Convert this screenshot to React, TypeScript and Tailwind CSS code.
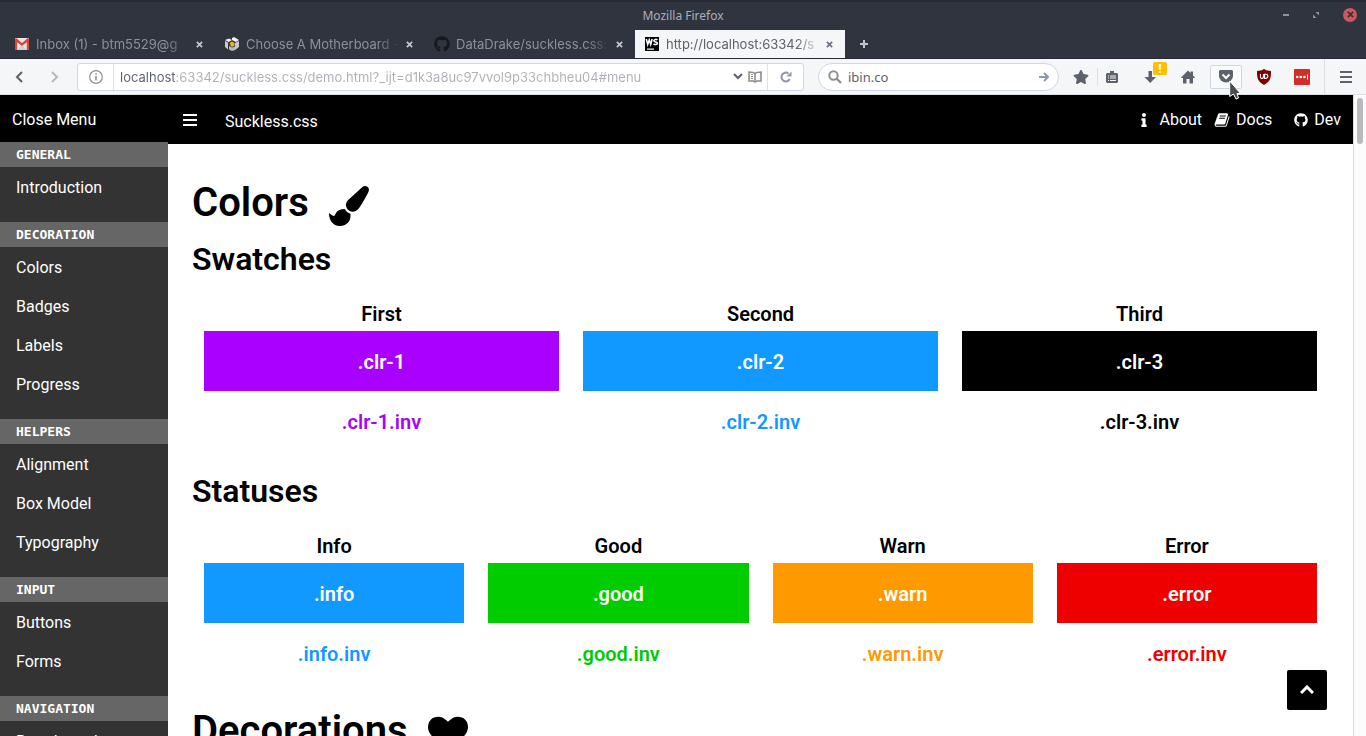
import type { ReactNode } from 'react';
import { FaGithub, FaStar, FaInfo } from 'react-icons/fa';

const menu = [
  { title: 'General', items: ['Introduction'] },
  { title: 'Decoration', items: ['Colors', 'Badges', 'Labels', 'Progress'] },
  { title: 'Helpers', items: ['Alignment', 'Box Model', 'Typography'] },
  { title: 'Input', items: ['Buttons', 'Forms'] },
  { title: 'Navigation', items: ['Breadcrumbs'] },
];

const swatches = [
  { label: 'First', name: '.clr-1', fill: 'bg-[#aa00ff]', inv: 'text-[#aa00ff]' },
  { label: 'Second', name: '.clr-2', fill: 'bg-[#1199ff]', inv: 'text-[#1199ff]' },
  { label: 'Third', name: '.clr-3', fill: 'bg-black', inv: 'text-black' },
];

const statuses = [
  { label: 'Info', name: '.info', fill: 'bg-[#1199ff]', inv: 'text-[#1199ff]' },
  { label: 'Good', name: '.good', fill: 'bg-[#00cc00]', inv: 'text-[#00cc00]' },
  { label: 'Warn', name: '.warn', fill: 'bg-[#ff9900]', inv: 'text-[#ff9900]' },
  { label: 'Error', name: '.error', fill: 'bg-[#ee0000]', inv: 'text-[#ee0000]' },
];

function BrushIcon() {
  return (
    <svg viewBox="0 0 1792 1792" className="size-10" fill="currentColor">
      <path d="M1615 0q70 0 122.5 46.5t52.5 116.5q0 63-45 151-332 629-465 752-97 91-218 91-126 0-216.5-92.5t-90.5-219.5q0-128 92-212l638-579q59-54 130-54zm-909 1034q39 76 106.5 130t150.5 76l1 71q4 213-129.5 347t-348.5 134q-123 0-218-46.5t-152.5-127.5-86.5-183-29-220q7 5 41 30t62 44.5 59 36.5 46 17q41 0 55-37 25-66 57.5-112.5t69.5-76 88-47.5 103-25.5 125-10.5z" />
    </svg>
  );
}

function HeartIcon() {
  return (
    <svg viewBox="0 0 1792 1792" className="size-10" fill="currentColor">
      <path d="M896 1664q-26 0-44-18l-624-602q-10-8-27.5-26t-55.5-65.5-68-97.5-53.5-121-23.5-138q0-220 127-344t351-124q62 0 126.5 21.5t120 58 95.5 68.5 76 68q36-36 76-68t95.5-68.5 120-58 126.5-21.5q224 0 351 124t127 344q0 221-229 450l-623 600q-18 18-44 18z" />
    </svg>
  );
}

function BookIcon() {
  return (
    <svg viewBox="0 0 1792 1792" className="size-4" fill="currentColor">
      <path d="M1703 478q40 57 18 129l-275 906q-19 64-76.5 107.5t-122.5 43.5h-923q-77 0-148.5-53.5t-99.5-131.5q-24-67-2-127 0-4 3-27t4-37q1-8-3-21.5t-3-19.5q2-11 8-21t16.5-23.5 16.5-23.5q23-38 45-91.5t30-91.5q3-10 .5-30t-.5-28q3-11 17-28t17-23q21-36 42-92t25-90q1-9-2.5-32t.5-28q4-13 22-30.5t22-22.5q19-26 42.5-84.5t27.5-96.5q1-8-3-25.5t-2-26.5q2-8 9-18t18-23 17-21q8-12 16.5-30.5t15-35 16-36 19.5-32 26.5-23.5 36-11.5 47.5 5.5l-1 3q38-9 51-9h761q74 0 114 56t18 130l-274 906q-36 119-71.5 153.5t-128.5 34.5h-869q-27 0-38 15-11 16-1 43 24 70 144 70h923q29 0 56-15.5t35-41.5l300-987q7-22 5-57 38 15 59 43zm-1064 2q-4 13 2 22.5t20 9.5h608q13 0 25.5-9.5t16.5-22.5l21-64q4-13-2-22.5t-20-9.5h-608q-13 0-25.5 9.5t-16.5 22.5zm-83 256q-4 13 2 22.5t20 9.5h608q13 0 25.5-9.5t16.5-22.5l21-64q4-13-2-22.5t-20-9.5h-608q-13 0-25.5 9.5t-16.5 22.5z" />
    </svg>
  );
}

function GmailIcon() {
  return (
    <svg viewBox="0 0 14 12" className="h-3 w-[14px]">
      <rect width="14" height="12" rx="1" fill="#e8e8e8" />
      <path d="M2 12l5-5 5 5z" fill="#d2d2d2" />
      <path d="M0 1.2L1.2 0 7 5 12.8 0 14 1.2V12h-2.2V4.2L7 8 2.2 4.2V12H0z" fill="#d8483b" />
    </svg>
  );
}

function CubeIcon() {
  return (
    <svg viewBox="0 0 14 14" className="size-[14px]">
      <path d="M0 3l4-1.5L7 3 3.5 5zM7 1l2-1 5 3-3 2-4-2z" fill="#f3f3f3" />
      <path d="M0 4l3 1.5v7L0 10zM14 4l-4 2v7l4-3z" fill="#c9c9c9" />
      <path d="M4 9l3 1.5 3-1V13l-3 1-3-1.5z" fill="#b9b9b9" />
      <path d="M5 5.5L7 4.500l2.500 1.500v2.500L7 10 5 8.5z" fill="#f0b323" />
      <path d="M3.500 6l2 1v2l-2-1z" fill="#5c4a1c" />
    </svg>
  );
}

function WebStormIcon() {
  return (
    <svg viewBox="0 0 14 14" className="size-[14px]">
      <rect width="14" height="14" fill="#000" />
      <path d="M1.300 2l1.400 5.500L4.200 3l1.500 4.500L7.100 2M12.500 3c-1-.9-3.600-.8-3.600.7 0 1.600 3.500.9 3.500 2.600 0 1.500-2.600 1.600-3.800.5" fill="none" stroke="#fff" strokeWidth="1.600" />
      <path d="M2 11.500h7v1.200H2z" fill="#fff" />
    </svg>
  );
}

function CloseIcon() {
  return (
    <svg viewBox="0 0 8 8" className="size-[7px]" stroke="currentColor" strokeWidth="2">
      <path d="M1 1l6 6M7 1L1 7" />
    </svg>
  );
}

type TabProps = { icon: ReactNode; title: string; active?: boolean };

function Tab({ icon, title, active }: TabProps) {
  return (
    <div className={`flex w-[210px] items-center pr-3 pl-[9px] ${active ? 'bg-[#f5f6f7] text-[#5c616c]' : 'text-[#8b919b]'}`}>
      <button className="flex min-w-0 flex-1 items-center gap-[6px] text-[13px]">
        <span className="flex size-4 shrink-0 items-center justify-center">{icon}</span>
        <span className="min-w-0 flex-1 overflow-hidden pt-[2px] text-left whitespace-nowrap mask-r-from-85%">{title}</span>
      </button>
      <button aria-label="Close tab" className={`ml-[6px] ${active ? 'text-[#6b7180]' : 'text-[#c3c7cf]'}`}>
        <CloseIcon />
      </button>
    </div>
  );
}

function Browser() {
  return (
    <div className="shrink-0 font-['Noto_Sans',sans-serif]">
      <div className="border-b border-[#262932] bg-[#2f343f]">
        <div className="grid h-[30px] grid-cols-3 items-center border-t-2 border-[#272a34] text-[#a9b0bd]">
          <span className="col-start-2 text-center text-xs">Mozilla Firefox</span>
          <div className="flex h-full items-center justify-end gap-6 pr-[9px] pb-[3px]">
            <button aria-label="Minimize" className="h-[2px] w-[6px] bg-[#8e949f]" />
            <button aria-label="Restore" className="text-[#8e949f]">
              <svg viewBox="0 0 6 6" className="size-[6px]" fill="currentColor">
                <path d="M2.500 0H6v3.500zM0 2.500L3.500 6H0z" />
              </svg>
            </button>
            <button aria-label="Close window" className="flex size-[14px] items-center justify-center rounded-full bg-[#cc575d] text-[#2f343f]">
              <CloseIcon />
            </button>
          </div>
        </div>
        <div className="flex h-[28px] pl-[5px] font-['Inter','Noto_Sans',sans-serif]">
          <Tab icon={<GmailIcon />} title="Inbox (1) - btm5529@g" />
          <Tab icon={<CubeIcon />} title="Choose A Motherboard -" />
          <Tab icon={<FaGithub className="size-4 text-[#16181c]" />} title="DataDrake/suckless.css:" />
          <Tab icon={<WebStormIcon />} title="http://localhost:63342/s" active />
          <button aria-label="New tab" className="ml-[15px] text-[#c3c7cf]">
            <svg viewBox="0 0 8 8" className="size-2" fill="none" stroke="currentColor" strokeWidth="2">
              <path d="M4 0v8M0 4h8" />
            </svg>
          </button>
        </div>
      </div>

      <div className="flex h-9 items-center border-b border-[#dcdfe3] bg-[#f5f6f7] text-[#5c616c]">
        <button aria-label="Back" className="ml-[15px]">
          <svg viewBox="0 0 8 12" className="h-3 w-2" fill="none" stroke="currentColor" strokeWidth="2">
            <path d="M7 1L2 6l5 5" />
          </svg>
        </button>
        <button aria-label="Forward" className="ml-7 text-[#b5b8be]">
          <svg viewBox="0 0 8 12" className="h-3 w-2" fill="none" stroke="currentColor" strokeWidth="2">
            <path d="M1 1l5 5-5 5" />
          </svg>
        </button>

        <div className="ml-[18px] flex h-7 min-w-0 flex-1 items-center rounded-[3px] border border-[#cfd6e6] bg-white">
          <button aria-label="Site information" className="flex h-full w-9 shrink-0 items-center justify-center border-r border-[#dfe3ec] text-[#8a8e97]">
            <svg viewBox="0 0 14 14" className="size-[14px]" fill="none" stroke="currentColor">
              <circle cx="7" cy="7" r="6.300" strokeWidth="1.200" />
              <path d="M7 6v4.500M7 3.300v1.500" strokeWidth="1.600" />
            </svg>
          </button>
          <input
            aria-label="Address"
            defaultValue="localhost:63342/suckless.css/demo.html?_ijt=d1k3a8uc97vvol9p33chbheu04#menu"
            className="ml-[6px] min-w-0 flex-1 bg-linear-to-r from-[#5c616c] from-[55px] to-[#adb0b6] to-[55px] bg-clip-text pt-[2px] font-['Inter','Noto_Sans',sans-serif] text-[13px] text-transparent outline-none"
          />
          <button aria-label="Show history">
            <svg viewBox="0 0 10 7" className="h-[7px] w-[10px]" fill="none" stroke="currentColor" strokeWidth="2">
              <path d="M1 1l4 4 4-4" />
            </svg>
          </button>
          <button aria-label="Reader view" className="mx-[5px] text-[#8c8f8c]">
            <svg viewBox="0 0 14 12" className="h-3 w-[14px]" fill="none" stroke="currentColor" strokeWidth="1.600">
              <path d="M7 2.500C5.500 1 3.500 1 1 1v9h4.500L7 11l1.500-1H13V1C10.500 1 8.500 1 7 2.500v7" />
              <path d="M3 3.500h2M3 5.500h2M3 7.500h2" strokeWidth="1" />
            </svg>
          </button>
          <button aria-label="Reload" className="flex h-full w-[36px] items-center justify-center border-l border-[#dfe3ec] text-[#8f98a8]">
            <svg viewBox="0 0 12 12" className="size-3" fill="none" stroke="currentColor" strokeWidth="2">
              <path d="M9.800 8A4.400 4.400 0 1 1 8.500 2.500" />
              <path d="M6.500 5.500h5v-5z" fill="currentColor" stroke="none" />
            </svg>
          </button>
        </div>

        <div className="ml-[14px] flex h-7 w-[241px] items-center rounded-full border border-[#cfd6e6] bg-white px-[9px]">
          <svg viewBox="0 0 14 14" className="size-[14px] shrink-0 text-[#8f9090]" fill="none" stroke="currentColor" strokeWidth="2">
            <circle cx="5.500" cy="5.500" r="4.200" />
            <path d="M8.500 8.500L13 13" strokeWidth="2.400" />
          </svg>
          <input aria-label="Search" defaultValue="ibin.co" className="ml-[6px] min-w-0 flex-1 pt-[2px] text-[13px] outline-none" />
          <button aria-label="Go" className="text-[#8f98a8]">
            <svg viewBox="0 0 10 10" className="size-[10px]" fill="none" stroke="currentColor" strokeWidth="2">
              <path d="M0 5h8M5 1l4 4-4 4" />
            </svg>
          </button>
        </div>

        <div className="ml-[14px] flex items-center">
          <button aria-label="Bookmark" className="pr-2">
            <FaStar className="size-4" />
          </button>
          <span className="h-[18px] w-px bg-[#dcdfe3]" />
          <button aria-label="Bookmarks list" className="w-[33px] pl-2">
            <svg viewBox="0 0 12 12" className="size-3" fill="currentColor">
              <path d="M4 2V0h4v2h3l1 1v8l-1 1H1l-1-1V3l1-1z" />
              <path d="M2 5h1M4 5h6M2 7h1M4 7h6M2 9.500h1M4 9.500h6" stroke="#f5f6f7" />
            </svg>
          </button>
          <button aria-label="Downloads" className="relative flex w-[38px] justify-center">
            <svg viewBox="0 0 12 12" className="size-3" fill="currentColor">
              <path d="M4.500 0h3.500v6H12l-5.800 6L.5 6h4z" />
            </svg>
            <span className="absolute -top-[9px] left-[22px] flex h-[13px] w-[14px] items-center justify-center rounded-[2px] bg-[#ffbf00] text-xs leading-[13px] font-bold text-white">!</span>
          </button>
          <button aria-label="Home" className="flex w-[38px] justify-center">
            <svg viewBox="0 0 14 14" className="size-[14px]" fill="currentColor">
              <path d="M7 .5l2.500 2.500V1.500h2.500v4L14 7.500 13.500 8H12v5.500H8.500V9h-3v4.500H2V8H.5L0 7.500z" />
            </svg>
          </button>
          <button aria-label="Save to Pocket" className="relative mx-[3px] flex h-6 w-8 items-center justify-center rounded-[2px] border border-[#cfd6e6] bg-[#fafbfd]">
            <svg viewBox="0 0 14 13" className="h-[13px] w-[14px]">
              <path d="M1 0h12l1 1v5a7 6.500 0 0 1-14 0V1z" fill="currentColor" />
              <path d="M3.500 4.500L7 8l3.500-3.500" fill="none" stroke="#fff" strokeWidth="2" />
            </svg>
            <svg viewBox="0 0 12 20" className="absolute top-[14px] left-[18px] z-10 h-5 w-3">
              <path d="M.7 1v15.500l3.800-2.500 2.500 5 2.500-1-1.500-4.500h3.500z" fill="#4b4b4b" stroke="#fff" />
            </svg>
          </button>
          <button aria-label="uBlock Origin" className="flex w-[38px] justify-center">
            <svg viewBox="0 0 14 16" className="h-4 w-[14px]">
              <path d="M7 0c2.500 1.500 4.500 1.800 7 2 0 6 0 10-7 14C0 12 0 8 0 2c2.500-.2 4.500-.5 7-2z" fill="#800000" />
              <path d="M3.500 5v3q0 1.500 1.300 1.500T6.500 8V5M7 5.200h2q2 .2 2 2.100T9 9.400H7.600V5" fill="none" stroke="#fff" strokeWidth="1.100" />
            </svg>
          </button>
          <button aria-label="LastPass" className="flex w-[38px] justify-center">
            <svg viewBox="0 0 16 16" className="size-4">
              <rect width="16" height="16" rx="1" fill="#d32d27" />
              <circle cx="3.200" cy="8" r="1.300" fill="#fff" />
              <circle cx="6.800" cy="8" r="1.300" fill="#fff" />
              <circle cx="10.400" cy="8" r="1.300" fill="#fff" />
              <path d="M13.500 5.500v5" stroke="#fff" />
            </svg>
          </button>
        </div>
        <button aria-label="Open menu" className="ml-[3px] flex h-9 w-[42px] items-center justify-center border-l border-[#dcdfe3]">
          <svg viewBox="0 0 12 12" className="size-3" stroke="currentColor" strokeWidth="2">
            <path d="M0 1h12M0 6h12M0 11h12" />
          </svg>
        </button>
      </div>
    </div>
  );
}

function Sidebar() {
  return (
    <aside className="w-[168px] shrink-0 overflow-hidden bg-[#333333] text-white">
      <a href="#content" className="block h-[47px] bg-black px-3 leading-[49px]">
        Close Menu
      </a>
      {menu.map((group) => (
        <nav key={group.title} className="mb-4">
          <h6 className="bg-[#666666] px-4 font-['DejaVu_Sans_Mono',monospace] text-[13px] leading-[25px] font-bold uppercase">
            {group.title}
          </h6>
          {group.items.map((item) => (
            <a key={item} href="#menu" className="block h-[39px] px-4 leading-[41px]">
              {item}
            </a>
          ))}
        </nav>
      ))}
    </aside>
  );
}

function NavBar() {
  return (
    <header className="flex h-[49px] items-center bg-black px-3 text-white">
      <button aria-label="Toggle menu" className="ml-[3px]">
        <svg viewBox="0 0 14 12" className="h-3 w-[14px]" stroke="currentColor" strokeWidth="2">
          <path d="M0 1h14M0 6h14M0 11h14" />
        </svg>
      </button>
      <a href="#home" className="ml-7 pt-1">
        Suckless.css
      </a>
      <nav className="ml-auto flex items-center">
        <a href="#about" className="flex items-center gap-2">
          <FaInfo className="size-[14px]" />
          About
        </a>
        <a href="#docs" className="ml-3 flex items-center gap-[6px]">
          <BookIcon />
          Docs
        </a>
        <a href="#dev" className="ml-[22px] flex items-center gap-[6px]">
          <FaGithub className="size-[14px]" />
          Dev
        </a>
      </nav>
    </header>
  );
}

function Swatch({ label, name, fill, inv }: (typeof swatches)[number]) {
  return (
    <div className="flex-1 text-center text-xl font-semibold">
      <h4 className="leading-[34px]">{label}</h4>
      <div className={`h-[60px] leading-[62px] text-white ${fill}`}>{name}</div>
      <div className={`h-[60px] leading-[62px] ${inv}`}>{name}.inv</div>
    </div>
  );
}

function SwatchRow({ title, items }: { title: string; items: typeof swatches }) {
  return (
    <section className="mb-5">
      <h2 className="mb-[18px] text-[32px] leading-10 font-semibold">{title}</h2>
      <div className="flex gap-6 px-3">
        {items.map((item) => (
          <Swatch key={item.name} {...item} />
        ))}
      </div>
    </section>
  );
}

function Title({ children, icon }: { children: string; icon: ReactNode }) {
  return (
    <h1 className="mb-2 flex items-center gap-5 text-[40px] leading-[56px] font-semibold">
      {children}
      <span className="pt-[6px]">{icon}</span>
    </h1>
  );
}

export default function App() {
  return (
    <div className="flex h-screen flex-col overflow-hidden">
      <Browser />
      <div className="flex min-h-0 flex-1 bg-white font-['Roboto',sans-serif] text-base text-black">
        <Sidebar />
        <div className="relative min-w-0 flex-1 overflow-hidden">
          <NavBar />
          <main id="content" className="px-6 pt-[31px]">
            <Title icon={<BrushIcon />}>Colors</Title>
            <SwatchRow title="Swatches" items={swatches} />
            <SwatchRow title="Statuses" items={statuses} />
            <Title icon={<HeartIcon />}>Decorations</Title>
          </main>
          <button aria-label="Back to top" className="absolute right-[26px] bottom-[26px] flex size-10 items-center justify-center rounded-[2px] bg-black text-white">
            <svg viewBox="0 0 14 10" className="h-[10px] w-[14px]" fill="none" stroke="currentColor" strokeWidth="3">
              <path d="M1 8l6-6 6 6" />
            </svg>
          </button>
        </div>
        <div className="w-[13px] shrink-0 border-l border-[#dcdcdc] bg-[#fcfcfc] px-[3px] pt-[3px]">
          <div className="h-[46px] w-[6px] rounded-full bg-[#b8babf]" />
        </div>
      </div>
    </div>
  );
}
